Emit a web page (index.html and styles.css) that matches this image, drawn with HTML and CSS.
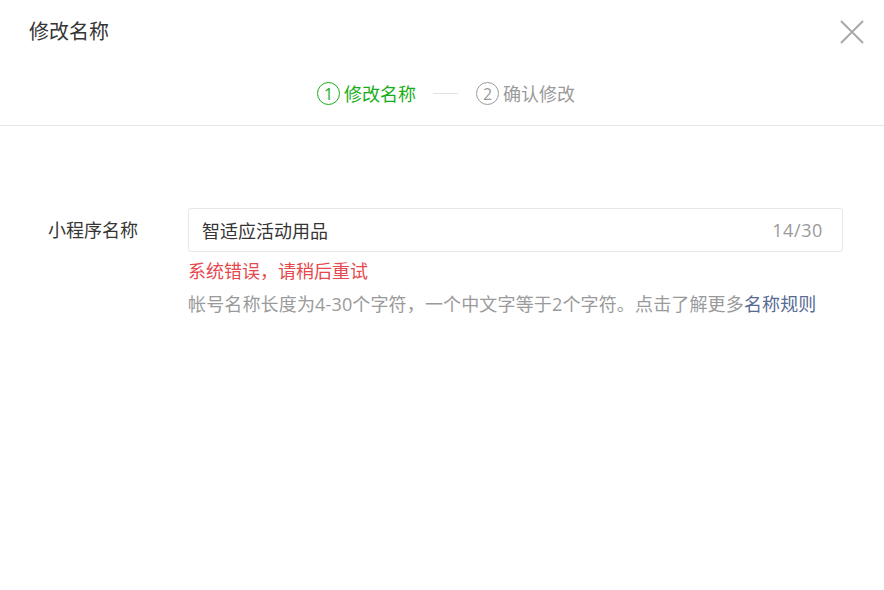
FILE: index.html
```html
<!DOCTYPE html>
<html lang="zh-CN">
<head>
<meta charset="utf-8">
<title>修改名称</title>
<link rel="stylesheet" href="styles.css">
</head>
<body>
<div class="dialog">
  <div class="header">
    <h1 class="title">修改名称</h1>
    <button class="close" aria-label="关闭">
      <svg width="24" height="24" viewBox="0 0 24 24"><path d="M1 1 L23 23 M23 1 L1 23" stroke="#a9a9a9" stroke-width="2" fill="none"/></svg>
    </button>
  </div>
  <div class="steps">
    <div class="step active"><span class="num">1</span><span class="label">修改名称</span></div>
    <span class="sep"></span>
    <div class="step"><span class="num">2</span><span class="label">确认修改</span></div>
  </div>
  <div class="form">
    <div class="row">
      <label class="field-label">小程序名称</label>
      <div class="field">
        <div class="input">
          <span class="value">智适应活动用品</span>
          <span class="count">14/30</span>
        </div>
        <p class="error">系统错误，请稍后重试</p>
        <p class="hint">帐号名称长度为4-30个字符，一个中文字等于2个字符。点击了解更多<a class="link" href="#">名称规则</a></p>
      </div>
    </div>
  </div>
</div>
</body>
</html>
```
FILE: styles.css
```css
* { box-sizing: border-box; }
html, body { margin: 0; padding: 0; background: #fff; }
body {
  font-family: "Open Sans", "Noto Sans CJK SC", sans-serif;
  color: #353535;
  width: 884px;
  height: 590px;
  overflow: hidden;
}
.dialog { width: 884px; }
.header {
  height: 64px;
  display: flex;
  align-items: center;
  justify-content: space-between;
  padding: 0 20px 0 29px;
}
.title {
  margin: 0;
  font-size: 20px;
  font-weight: normal;
  color: #353535;
  line-height: 28px;
}
.close {
  border: 0;
  background: none;
  padding: 0;
  width: 24px;
  height: 24px;
  display: flex;
  cursor: pointer;
}
.steps {
  height: 62px;
  display: flex;
  align-items: center;
  justify-content: center;
  padding-bottom: 2px;
  padding-left: 8px;
  border-bottom: 1px solid #e5e5e5;
}
.step {
  display: flex;
  align-items: center;
  color: #9a9a9a;
  font-size: 18px;
}
.step .num {
  width: 23px;
  height: 23px;
  border: 1px solid currentColor;
  border-radius: 50%;
  display: flex;
  align-items: center;
  justify-content: center;
  font-size: 16px;
  line-height: 1;
  margin-right: 4px;
}
.step .label { line-height: 24px; }
.step.active { color: #1aad19; }
.sep {
  width: 25px;
  height: 1px;
  background: #e2e2e2;
  margin: 0 18px 0 17px;
}
.form { padding: 82px 41px 0 48px; }
.row { display: flex; align-items: flex-start; }
.field-label {
  width: 140px;
  font-size: 18px;
  line-height: 44px;
  color: #353535;
}
.field { flex: 1; }
.input {
  height: 44px;
  border: 1px solid #e7e7eb;
  border-radius: 3px;
  display: flex;
  align-items: center;
  justify-content: space-between;
  padding: 0 19px 0 13px;
  font-size: 18px;
}
.value { color: #353535; }
.count { color: #9a9a9a; letter-spacing: 0.6px; }
.error {
  margin: 7px 0 0;
  font-size: 18px;
  line-height: 24px;
  color: #e5484d;
}
.hint {
  margin: 9px 0 0;
  font-size: 18px;
  line-height: 24px;
  color: #9a9a9a;
  letter-spacing: 0.15px;
}
.link { color: #576b95; text-decoration: none; }
```
